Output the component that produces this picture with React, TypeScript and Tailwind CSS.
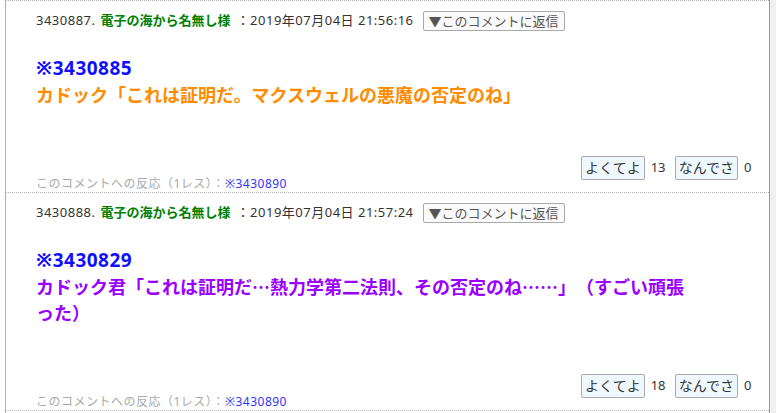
import React from "react";

type Comment = {
    no: string;
    date: string;
    anchor: string;
    body: string;
    bodyColor: string;
    good: number;
    bad: number;
    reply: string;
};

const comments: Comment[] = [
    {
        no: "3430887",
        date: "2019年07月04日 21:56:16",
        anchor: "※3430885",
        body: "カドック「これは証明だ。マクスウェルの悪魔の否定のね」",
        bodyColor: "text-[#ff8c00]",
        good: 13,
        bad: 0,
        reply: "※3430890",
    },
    {
        no: "3430888",
        date: "2019年07月04日 21:57:24",
        anchor: "※3430829",
        body: "カドック君「これは証明だ…熱力学第二法則、その否定のね……」（すごい頑張った）",
        bodyColor: "text-[#9900ff]",
        good: 18,
        bad: 0,
        reply: "※3430890",
    },
];

const latin = { fontFamily: '"Noto Sans", "Noto Sans CJK JP", sans-serif' };

function CommentBlock({ c, last }: { c: Comment; last: boolean }) {
    return (
        <div
            className={
                "border-t border-dotted border-[#b8b8b8]" +
                (last ? " border-b" : "")
            }
        >
            <div className="mt-[10px] flex h-[20px] items-center pl-[30px] text-[13px] text-[#333]" style={latin}>
                <span className="tracking-[0.5px]">{c.no}.</span>
                <span className="ml-[5px] font-bold text-[#008000]">電子の海から名無し様</span>
                <span className="ml-[6px] tracking-[0.5px]">：{c.date}</span>
                <button className="ml-[9px] h-[20px] rounded-[2px] border border-[#aaa] bg-[#fafafa] px-[5px] text-[13px] leading-[18px] text-[#555]">
                    ▼このコメントに返信
                </button>
            </div>

            <div className="mt-[24px] pl-[30px] text-[18px] font-bold leading-[26px] [text-spacing-trim:space-all]">
                <div className="text-[19px] tracking-[0.5px] text-[#1010ff]" style={latin}>{c.anchor}</div>
                <div className={"max-w-[655px] " + c.bodyColor}>{c.body}</div>
            </div>

            <div className="mt-[49px] flex items-center justify-end pr-[17px] text-[13px] text-[#333]" style={latin}>
                <button className="h-[24px] rounded-[2px] border border-[#aaa] bg-[#f0f8ff] px-[3px] text-[14px] leading-[22px] text-[#333]">
                    よくてよ
                </button>
                <span className="ml-[6px] w-[18px]">{c.good}</span>
                <button className="ml-[6px] h-[24px] rounded-[2px] border border-[#aaa] bg-[#f0f8ff] px-[3px] text-[14px] leading-[22px] text-[#333]">
                    なんでさ
                </button>
                <span className="ml-[6px] w-[8px]">{c.bad}</span>
            </div>

            <div className="-mt-[4px] pl-[30px] text-[12px] leading-[16px] tracking-[0.5px] text-[#aaa]" style={latin}>
                このコメントへの反応（1レス）：<span className="text-[#3333ff]">{c.reply}</span>
            </div>
        </div>
    );
}

export default function App() {
    return (
        <div
            className="flex h-[413px] w-[776px] overflow-hidden bg-white"
            style={{ fontFamily: '"Noto Sans CJK JP", "Noto Sans", sans-serif' }}
        >
            <div className="w-[5px] shrink-0" />
            <div className="w-[765px] shrink-0 border-l border-r border-l-[#b0b0b0] border-r-[#999]">
                {comments.map((c, i) => (
                    <CommentBlock key={c.no} c={c} last={i === comments.length - 1} />
                ))}
            </div>
            <div className="flex-1 bg-[#f0f0f0]" />
        </div>
    );
}
